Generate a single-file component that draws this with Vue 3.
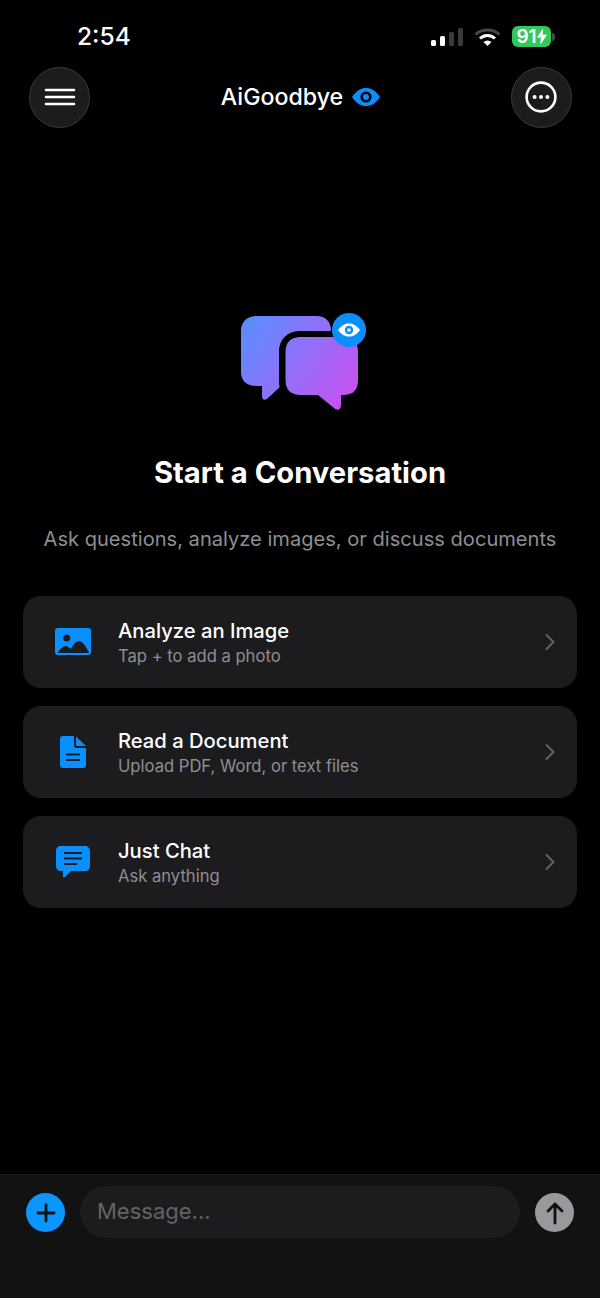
<template>
  <div class="pagina">
    <div class="status">
      <span class="hora">2:54</span>
      <div class="status-icones">
        <svg width="32" height="20" viewBox="0 0 32 20">
          <rect x="0" y="13" width="5" height="6" rx="1.5" fill="#fff" />
          <rect x="9" y="9" width="5" height="10" rx="1.5" fill="#fff" />
          <rect x="18" y="5" width="5" height="14" rx="1.5" fill="#3a3a3c" />
          <rect x="27" y="1" width="5" height="18" rx="1.5" fill="#3a3a3c" />
        </svg>
        <svg class="wifi" width="27" height="20" viewBox="0 0 27 20" fill="none" stroke-linecap="butt">
          <path d="M1.5 7.5 C8 1.5 19 1.5 25.5 7.5" stroke="#48484a" stroke-width="3" />
          <path d="M6 11.5 C10.5 7.5 16.5 7.5 21 11.5" stroke="#fff" stroke-width="3" />
          <path d="M13.5 19 L9.5 15 C12 13 15 13 17.5 15 Z" fill="#fff" />
        </svg>
        <div class="bateria">
          <div class="bateria-corpo">91<svg width="10" height="17" viewBox="0 0 9 15"><path d="M5.5 0 L0 8.5 H3.5 L3 15 L9 6 H5.2 Z" fill="#fff" /></svg></div>
          <div class="bateria-ponta"></div>
        </div>
      </div>
    </div>

    <header class="topo">
      <button class="botao-redondo">
        <svg width="32" height="20" viewBox="0 0 32 20" stroke="#fff" stroke-width="2.6" stroke-linecap="round">
          <path d="M2 3 H30 M2 10 H30 M2 17 H30" />
        </svg>
      </button>
      <div class="marca">
        <span>AiGoodbye</span>
        <svg width="28" height="18" viewBox="1 1 28 18">
          <path d="M1 10 C6 3 10 1 15 1 C20 1 24 3 29 10 C24 17 20 19 15 19 C10 19 6 17 1 10 Z" fill="#0a8fff" />
          <circle cx="15" cy="10" r="5.6" fill="#000" />
          <circle cx="15" cy="10" r="3" fill="#0a8fff" />
        </svg>
      </div>
      <button class="botao-redondo">
        <svg width="34" height="34" viewBox="0 0 34 34">
          <circle cx="17" cy="17" r="14.4" fill="none" stroke="#fff" stroke-width="2.6" />
          <circle cx="10.6" cy="17" r="2" fill="#fff" />
          <circle cx="17" cy="17" r="2" fill="#fff" />
          <circle cx="23.4" cy="17" r="2" fill="#fff" />
        </svg>
      </button>
    </header>

    <main class="conteudo">
      <svg class="logo" width="128" height="100" viewBox="240 312 128 100">
        <defs>
          <linearGradient id="grad" gradientUnits="userSpaceOnUse" x1="245" y1="325" x2="355" y2="400">
            <stop offset="0" stop-color="#5a8dff" />
            <stop offset="1" stop-color="#cc4ff0" />
          </linearGradient>
        </defs>
        <path d="M257 316 H316 C326 316 331 322 331 331 V372 C331 381 326 386 316 386 H281 L268 398 C265 401 262 400 262 396 V386 H257 C247 386 241 381 241 372 V331 C241 322 247 316 257 316 Z" fill="url(#grad)" />
        <rect x="279" y="331" width="85" height="71" rx="20" fill="#000" />
        <path d="M301 337 H343 C353 337 358 342 358 352 V380 C358 390 353 395 343 395 H341 V405 C341 410 337 411 334 408 L318 395 H301 C291 395 285.500 390 285.500 380 V352 C285.500 342 291 337 301 337 Z" fill="url(#grad)" />
        <circle cx="349" cy="330" r="17" fill="#0a8fff" />
        <path d="M338 330 C342 325 345 323.500 349 323.500 C353 323.500 356 325 360 330 C356 335 353 336.500 349 336.500 C345 336.500 342 335 338 330 Z" fill="#fff" />
        <circle cx="349" cy="330" r="4.200" fill="#0a8fff" />
        <circle cx="349" cy="330" r="1.800" fill="#fff" />
      </svg>

      <h1 class="titulo">Start a Conversation</h1>
      <p class="subtitulo">Ask questions, analyze images, or discuss documents</p>

      <div class="lista">
        <div v-for="item in opcoes" :key="item.titulo" class="cartao">
          <div class="cartao-icone">
            <svg v-if="item.icone === 'imagem'" width="36" height="27" viewBox="0 0 36 27">
              <rect width="36" height="27" rx="3" fill="#0a8fff" />
              <circle cx="11.700" cy="10" r="3.500" fill="#1c1c1e" />
              <path d="M2.700 25 C5 21 8 18 10.700 18 C12.500 18 14.500 20 16 21 C18 17 21 13 24 13 C28 13 32 20 34 25 Z" fill="#1c1c1e" />
            </svg>
            <svg v-else-if="item.icone === 'documento'" width="26" height="32" viewBox="0 0 26 32">
              <path d="M3 0 H14 V9 C14 11 15 12 17 12 H26 V29 C26 31 25 32 23 32 H3 C1 32 0 31 0 29 V3 C0 1 1 0 3 0 Z" fill="#0a8fff" />
              <path d="M16 0.500 L26 10 H17.500 C16.500 10 16 9.500 16 8.500 Z" fill="#0a8fff" />
              <path d="M6 18.500 H20 M6 24 H20" stroke="#1c1c1e" stroke-width="1.800" />
            </svg>
            <svg v-else width="34" height="32" viewBox="0 0 34 32">
              <path d="M5 0 H29 C32 0 34 2 34 5 V20 C34 23 32 25 29 25 H15 L9 31 C8 32 7 31.500 7 30 V25 H5 C2 25 0 23 0 20 V5 C0 2 2 0 5 0 Z" fill="#0a8fff" />
              <path d="M8 7 H26 M8 12.500 H26 M8 18 H21" stroke="#1c1c1e" stroke-width="1.800" />
            </svg>
          </div>
          <div class="cartao-texto">
            <span class="cartao-titulo">{{ item.titulo }}</span>
            <span class="cartao-desc">{{ item.desc }}</span>
          </div>
          <svg class="seta" width="10" height="18" viewBox="0 0 10 18" fill="none" stroke="#636366" stroke-width="2" stroke-linecap="round" stroke-linejoin="round">
            <path d="M1.500 2 L8.500 9 L1.500 16" />
          </svg>
        </div>
      </div>
    </main>

    <footer class="rodape">
      <button class="circulo mais">
        <svg width="20" height="20" viewBox="0 0 20 20" stroke="#111" stroke-width="2.800" stroke-linecap="round">
          <path d="M10 2 V18 M2 10 H18" />
        </svg>
      </button>
      <div class="campo">Message...</div>
      <button class="circulo enviar">
        <svg width="18" height="24" viewBox="0 0 18 24" fill="none" stroke="#111" stroke-width="2.800" stroke-linecap="round" stroke-linejoin="round">
          <path d="M9 22 V3 M2 10 L9 3 L16 10" />
        </svg>
      </button>
    </footer>
  </div>
</template>

<script setup>
const opcoes = [
  { icone: 'imagem', titulo: 'Analyze an Image', desc: 'Tap + to add a photo' },
  { icone: 'documento', titulo: 'Read a Document', desc: 'Upload PDF, Word, or text files' },
  { icone: 'chat', titulo: 'Just Chat', desc: 'Ask anything' }
]
</script>

<style>
html, body {
  background: #000;
}
</style>

<style scoped>
.pagina {
  width: 600px;
  height: 1298px;
  display: flex;
  flex-direction: column;
  background: #000;
  color: #fff;
  font-family: Inter, "Liberation Sans", sans-serif;
  overflow: hidden;
}

.status {
  height: 67px;
  box-sizing: border-box;
  padding: 20px 45px 0 77px;
  display: flex;
  justify-content: space-between;
  align-items: flex-start;
}

.hora {
  font-size: 24.500px;
  font-weight: 500;
  line-height: 32px;
}

.status-icones {
  display: flex;
  align-items: center;
  gap: 11px;
  margin-top: 6px;
}

.bateria {
  display: flex;
  align-items: center;
}

.bateria-corpo {
  width: 39px;
  height: 21px;
  background: #34c759;
  border-radius: 6px;
  font-size: 19px;
  font-weight: 600;
  line-height: 21px;
  display: flex;
  align-items: center;
  justify-content: center;
}

.bateria-ponta {
  width: 3px;
  height: 8px;
  margin-left: 1px;
  background: #48484a;
  border-radius: 0 3px 3px 0;
}

.topo {
  height: 60px;
  padding: 0 28px 0 29px;
  display: flex;
  align-items: center;
  justify-content: space-between;
}

.botao-redondo {
  width: 61px;
  height: 61px;
  border-radius: 50%;
  border: 1px solid #3a3a3c;
  background: #1c1c1e;
  padding: 0;
  display: flex;
  align-items: center;
  justify-content: center;
}

.marca {
  display: flex;
  align-items: center;
  gap: 9px;
  font-size: 23.200px;
  font-weight: 500;
}

.conteudo {
  flex: 1;
  display: flex;
  flex-direction: column;
  align-items: center;
  padding: 185px 23px 0;
}

.logo {
  margin-left: 8px;
}

.titulo {
  margin: 42px 0 0;
  font-size: 29.200px;
  font-weight: 700;
  line-height: 38px;
}

.subtitulo {
  margin: 33px 0 0;
  font-size: 20.100px;
  line-height: 28px;
  color: #8e8e93;
  white-space: nowrap;
}

.lista {
  width: 100%;
  margin-top: 42.500px;
  display: flex;
  flex-direction: column;
  gap: 17.500px;
}

.cartao {
  height: 92.500px;
  box-sizing: border-box;
  background: #1c1c1e;
  border-radius: 18px;
  padding: 0 22px 0 32px;
  display: flex;
  align-items: center;
}

.cartao-icone {
  width: 36px;
  margin-right: 27px;
  display: flex;
  justify-content: center;
}

.cartao-texto {
  flex: 1;
  display: flex;
  flex-direction: column;
  padding-top: 2px;
}

.cartao-titulo {
  font-size: 20.200px;
  font-weight: 500;
  line-height: 26px;
}

.cartao-desc {
  font-size: 16.600px;
  line-height: 24px;
  color: #8e8e93;
}

.rodape {
  height: 124px;
  box-sizing: border-box;
  background: #121212;
  border-top: 1px solid #1c1c1e;
  padding: 11px 26px 0;
  display: flex;
  align-items: flex-start;
}

.circulo {
  width: 39px;
  height: 39px;
  margin-top: 7px;
  border: none;
  border-radius: 50%;
  padding: 0;
  display: flex;
  align-items: center;
  justify-content: center;
  flex-shrink: 0;
}

.mais {
  background: #0a95ff;
}

.enviar {
  background: #98989d;
}

.campo {
  width: 440px;
  height: 52px;
  margin: 0 15px;
  box-sizing: border-box;
  padding-left: 17px;
  background: #1c1c1e;
  border-radius: 26px;
  font-size: 22px;
  line-height: 51px;
  color: #636366;
}
</style>
